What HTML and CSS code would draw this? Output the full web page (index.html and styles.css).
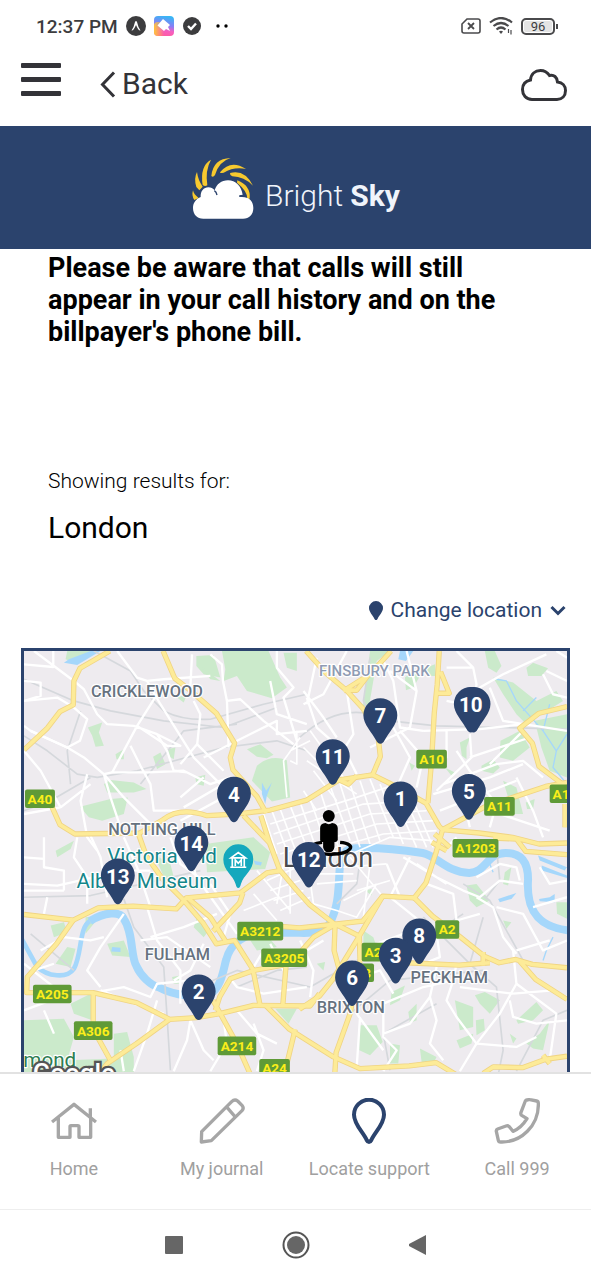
FILE: index.html
```html
<!DOCTYPE html>
<html lang="en">
<head>
  <meta charset="UTF-8">
  <meta name="viewport" content="width=device-width, initial-scale=1.0">
  <title>Bright Sky - Locate support</title>
  <link rel="stylesheet" href="styles.css">
</head>
<body>
  <!-- Status bar -->
  <div class="status-bar">
    <span class="clock">12:37 PM</span>
    <svg class="status-icon" width="20" height="20" viewBox="0 0 20 20"><circle cx="10" cy="10" r="10" fill="#3c3c3e"/><path d="M5.500 14.500Q8 11 9 6Q10 4 11 6Q12 11 14.500 14.500Q12.500 15 10 9Q7.500 15 5.500 14.500Z" fill="#fff"/></svg>
    <svg class="status-icon" width="20" height="20" viewBox="0 0 20 20">
      <defs><linearGradient id="app" x1="0.600" y1="0" x2="0.400" y2="1"><stop offset="0" stop-color="#35b8f5"/><stop offset="0.450" stop-color="#8a7df5"/><stop offset="0.700" stop-color="#f55fc0"/><stop offset="1" stop-color="#ff5aa0"/></linearGradient>
      <linearGradient id="app-edge"><stop offset="0" stop-color="#ffc53a"/><stop offset="0.500" stop-color="#ffc53a" stop-opacity="0"/></linearGradient></defs>
      <rect width="20" height="20" rx="4" fill="url(#app)"/><rect y="6" width="20" height="14" rx="4" fill="url(#app-edge)"/>
      <path d="M9 3L16 9L14 11L16 15L12 13L10 15L3.500 9.500Z" fill="#fff"/>
    </svg>
    <svg class="status-icon" width="20" height="20" viewBox="0 0 20 20"><circle cx="10" cy="10" r="9" fill="#3c3c3e"/><path d="M6 10L9 13L14 7.500" fill="none" stroke="#fff" stroke-width="2.400"/></svg>
    <svg class="dots" width="12" height="4"><circle cx="2" cy="2" r="1.700"/><circle cx="10" cy="2" r="1.700"/></svg>
    <div class="status-right">
      <svg width="20" height="16" viewBox="0 0 20 16" fill="none" stroke="#4a4a4c"><path d="M6 1H17Q19 1 19 3V13Q19 15 17 15H3Q1 15 1 13V6Z" stroke-width="1.600"/><path d="M7 5L13 11M13 5L7 11" stroke-width="1.800"/></svg>
      <svg width="24" height="18" viewBox="0 0 24 18" fill="none" stroke="#4a4a4c" stroke-width="2.200"><path d="M1 5.500Q12-3.500 23 5.500M4.500 9Q12 3 19.500 9M7.500 12.500Q12 8.500 16.500 12.500"/><path d="M10 14.500L12 17L14 14.500Q12 13 10 14.500Z" fill="#4a4a4c" stroke="none"/><path d="M19.500 12V16M22 13V17.500" stroke-width="1.200"/></svg>
      <span class="battery">96</span>
    </div>
  </div>

  <!-- Header -->
  <header class="header">
    <button class="menu" aria-label="Menu"><span></span><span></span><span></span></button>
    <a class="back" href="#back">
      <svg width="16" height="27" viewBox="0 0 16 27"><path d="M14 1.500L2.500 13.500L14 25.500" fill="none" stroke="#333338" stroke-width="3"/></svg>
      Back
    </a>
    <button class="cloud" aria-label="Quick exit">
      <svg width="46" height="32" viewBox="0 0 46 32"><path d="M11 30.500C5 30.500 1.500 26 1.500 20.500C1.500 15.500 4.500 12 9.500 11C10 5 14 1.500 19.500 1.500C24 1.500 26.500 3.500 28.500 6.500C33 5.500 36 8 36.500 13C41.500 13.500 44.500 17 44.500 21.500C44.500 27 41 30.500 36 30.500Z" fill="none" stroke="#333338" stroke-width="3"/></svg>
    </button>
  </header>

  <div class="banner">
    <svg class="logo" width="64" height="64" viewBox="0 0 192 192">
      <g fill="#f7c92f">
        <path d="M10 132Q1 119 6 103Q8 115 23 126Z"/>
        <path d="M16 93Q8 67 18 48Q21 72 35 92L25 103Z"/>
        <path d="M35 87Q26 30 60 11Q42 43 49 88Q42 93 35 87Z"/>
        <path d="M61 60Q66 8 119 6Q84 16 72 57Q66 66 61 60Z"/>
        <path d="M87 49Q119 9 165 39Q130 31 98 50Q86 53 87 49Z"/>
        <path d="M117 51Q161 39 186 89Q159 62 124 61Q116 58 117 51Z"/>
        <path d="M139 73Q180 89 176 128L169 128Q169 105 138 80Z"/>
      </g>
      <path d="M37 188C18 188 6 175 6 156C6 139 17 128 29 123C28 106 38 94 52 94C60 94 66 97 71 103C77 84 91 73 111 73C134 73 151 90 155 116Q144 116 145 122L161 124C176 126 187 138 187 156C187 176 175 188 156 188Z" fill="#fff"/>
      <path d="M70 104Q76 107 78 117M145 120H162" fill="none" stroke="#2b436d" stroke-width="4"/>
    </svg>
    <span class="brand">Bright <strong>Sky</strong></span>
  </div>

  <main class="content">
    <p class="notice">Please be aware that calls will still appear in your call history and on the billpayer's phone bill.</p>

    <div class="results">
      <p class="results-label">Showing results for:</p>
      <p class="results-place">London</p>
    </div>

    <button class="change-location">
      <svg width="14" height="19" viewBox="-51 -137 102 137"><path d="M0 0C-6 0-9-4-12-9C-25-35-51-58-51-86A51 51 0 0 1 51-86C51-58 25-35 12-9C9-4 6 0 0 0Z" fill="#2b436d"/></svg>
      <span>Change location</span>
      <svg width="16" height="11" viewBox="0 0 16 11"><path d="M1.500 2L8 8.500L14.500 2" fill="none" stroke="#2b436d" stroke-width="3"/></svg>
    </button>

    <div class="map">
      <svg viewBox="0 0 1632 1400" preserveAspectRatio="xMidYMin slice" role="group" aria-label="Map of London">
        <defs>
          <path id="pin" d="M0 0C-6 0-9-4-12-9C-25-35-51-58-51-86A51 51 0 0 1 51-86C51-58 25-35 12-9C9-4 6 0 0 0Z"/>
          <g id="major">
            <path d="M258 0L168 52L150 90L148 162L108 182L70 232L0 297"/>
            <path d="M418 0L453 82L498 117L578 187L633 277L620 320L628 357L700 437L728 487"/>
            <path d="M78 455L108 522L153 550L348 547L418 507Q468 467 550 495L640 490L740 478L850 448L948 387L1048 372L1118 407L1208 457L1248 527L1258 537L1238 607L1208 697L1173 742L1078 737L1000 870L928 987L888 1037L828 1077"/>
            <path d="M848 0L908 67L968 117L1018 172L1063 247L1071 317L1048 372M1103 0L1040 70L960 120M1038 68L1000 118L968 117M940 384L975 400L1000 375"/>
            <path d="M1248 0L1242 100L1233 187L1225 330L1214 457M1252 62L1278 127L1240 127"/>
            <path d="M1632 167L1548 187L1490 232L1528 277L1548 347L1632 410"/>
            <path d="M1258 537L1388 467L1478 437L1568 407L1632 395M1626 460V530"/>
            <path d="M1258 537L1368 547L1468 560L1548 580L1632 577M1410 562L1480 565L1508 602L1632 612M1226 575L1270 600M1234 550L1280 590"/>
            <path d="M0 792L148 809L223 772L328 767L458 775L488 742L650 727L730 667L770 660"/>
            <path d="M148 809L98 880L10 980L8 1027L208 1027L338 1057L438 1107L518 1102L588 1090L690 1065L860 1067L888 1030"/>
            <path d="M438 1107L338 1180L250 1240L210 1290M208 1027L208 1137L258 1227"/>
            <path d="M343 547L368 617L418 687L478 747L538 817L578 880L633 870L688 957L710 1067M492 742L560 800L606 872"/>
            <path d="M658 727L648 757L568 842M660 495L738 577L768 657L818 717L858 762L935 822M712 495L738 577"/>
            <path d="M690 960L620 985L588 1040L575 1080M568 1050L638 1177L688 1290M788 940L778 1062"/>
            <path d="M728 1067L798 1137L850 1170L930 1220L1010 1255L1158 1247L1238 1237L1310 1280M815 1137L778 1290"/>
            <path d="M760 827L828 832L898 825L1018 812L1078 737M935 822L932 900L948 960M938 822L1008 857L1010 930L980 1090L938 1207L933 1290M935 822L870 860L800 940L690 960"/>
            <path d="M1173 742L1228 797L1308 857L1383 917L1428 937L1478 927L1528 942L1632 952M1150 937L1308 944L1400 937M1380 905V945M1488 930L1538 987L1632 1047"/>
            <path d="M1380 1270L1410 1250L1500 1252L1568 1227L1632 1218M1560 1215L1580 1240"/>
          </g>
        </defs>
        <rect width="1632" height="1400" fill="#eeebef"/>

        <!-- Parks -->
        <g fill="#cbeacb">
          <path d="M130 0H220L160 40L125 25ZM518 15L570 12L590 80L540 70L518 45ZM595 0H735L770 80L790 110L745 142L670 120L640 75L600 90L605 55Z"/>
          <path d="M780 5H820V60L790 50ZM460 140L490 130L480 155ZM192 230L235 215L225 245L240 285L215 288L205 255ZM388 318L410 305L425 340L400 355ZM430 295L455 290L450 325L432 315ZM275 310L300 295L300 325H278ZM515 380L545 372L540 405L518 400Z"/>
          <path d="M670 295L710 280L750 312L730 322L700 318ZM700 345Q740 310 790 328L800 440L745 452L685 390ZM240 400L260 388L330 395L368 415L330 425H250ZM168 468L260 445L312 440L300 490L235 510L195 500ZM95 600L150 570L140 595L100 620Z"/>
          <path d="M545 580L690 560L740 605L725 655L550 665ZM390 610L440 640L458 710L430 700ZM80 825L120 815L130 845L90 860ZM185 800L230 795L185 850ZM250 880L300 870L320 920L265 915ZM130 890L155 895L140 950L95 940ZM520 800L560 835L540 860L510 830Z"/>
          <path d="M680 870L730 855L760 890L700 900ZM445 980L470 975L465 1000L450 1000ZM0 1110L120 1105L150 1160L130 1230L270 1225L270 1150L310 1145L330 1220L330 1400H0ZM140 1060L200 1030L205 1110L150 1090ZM755 1075L820 1075L795 1120Z"/>
          <path d="M1040 0H1100L1060 30L1038 160L1018 170ZM1145 80L1170 60L1190 75L1170 110L1148 118ZM1208 50L1235 40L1238 75L1215 75ZM1385 0H1415L1435 45L1420 65L1395 50ZM1410 80L1470 95L1540 150L1600 120L1620 150L1540 200L1510 220L1480 190L1440 130ZM1510 50L1530 35L1575 52L1555 75L1515 75Z"/>
          <path d="M1535 210L1632 190V380L1580 360L1555 290ZM1432 270L1490 240L1520 290L1470 330L1430 320ZM1375 345L1410 325L1430 350L1410 368L1375 360ZM1310 275L1340 260L1330 290L1330 325L1316 315ZM1265 350L1295 365L1285 375ZM1158 335L1175 345L1165 360ZM1440 390L1480 410L1500 490H1470ZM1508 455L1535 445L1530 475H1512Z"/>
          <path d="M1330 705L1360 700L1400 750L1360 770L1340 750ZM1445 665L1465 650L1455 705L1440 700ZM1600 755H1632V805L1602 790ZM1440 810L1465 815L1450 835ZM1025 720L1045 715V735ZM1020 840L1050 860L1060 890L1020 880ZM1105 1025L1145 1005L1130 1050L1100 1065ZM1155 1085L1180 1060V1110L1160 1118ZM1295 1050L1350 1070L1350 1130L1310 1140Z"/>
          <path d="M1355 1035L1385 1025L1430 1050L1400 1090L1370 1060ZM1358 1110L1382 1105L1385 1140L1360 1155ZM1300 1170L1350 1150L1345 1180L1310 1195ZM1008 1125L1060 1125L1078 1175L1040 1215L1008 1200ZM1100 1180L1130 1185L1125 1240L1100 1240ZM1190 1195L1240 1220L1230 1240L1195 1235ZM1480 1110L1540 1055L1560 1080L1530 1110L1485 1120ZM1510 1180L1550 1150L1580 1110L1560 1200L1530 1195ZM1460 1150L1480 1165L1470 1180ZM880 940L905 935L900 960ZM530 45L590 90L560 85Z"/>
        </g>

        <!-- River and lakes -->
        <g fill="#a5d7fb">
          <path d="M135 25L200 0H230L160 42L120 35ZM1130 0H1170L1148 30L1125 25ZM715 395L728 420L745 395L730 435L725 460L715 430ZM265 890L290 892V905L262 903ZM690 630L715 635L712 645L695 642ZM1425 745L1480 727L1465 745L1430 755ZM1548 745L1580 740L1595 730V755L1550 752ZM1545 615L1632 650L1625 660L1550 630ZM1556 645L1632 675V682L1556 660Z"/>
        </g>
        <g class="river">
          <path class="upper" d="M-10 860L38 947C70 980 130 985 150 955C175 910 165 830 198 812"/>
          <path d="M198 812C240 785 290 780 300 805C330 850 320 920 338 947C350 975 380 1005 408 1012C450 1035 530 1045 560 1030C595 1010 600 950 608 927C620 880 660 855 708 847L828 847C880 850 910 835 918 820C945 770 945 720 948 667C950 610 965 592 1000 593C1060 590 1110 594 1198 607C1240 615 1270 665 1338 667C1390 665 1390 607 1448 607C1490 607 1515 630 1515 687C1510 760 1530 830 1640 840"/>
          <path class="stream" d="M1420 85L1450 90L1480 150L1560 240L1600 300L1590 350L1632 400M1500 180L1540 140M1560 240L1580 160M1632 250L1600 300M1590 860L1570 900L1560 930M1400 640L1410 665"/>
        </g>

        <!-- Railways -->
        <g class="rail">
          <path d="M210 0L320 60L360 120L420 180Q480 210 560 205L720 160L850 130M0 85L150 150L260 180L420 210L600 230L760 170M350 400L440 290L480 240L640 220M140 400L130 300L170 180M0 255L70 300L160 370L220 380L340 360L600 290L760 270L850 300M828 260Q960 140 1100 210L1240 225L1632 235M1040 20L1020 150L1080 260"/>
          <path d="M0 740L200 735L400 690L530 660M0 480L80 450L200 380M300 745L330 830L420 950L430 1100L440 1260M20 850L150 960M640 1010L760 960L850 950M520 1010L640 960L860 1010M1500 930L1400 750L1320 700M1390 740L1430 690L1420 590M1380 800L1340 940L1420 1010L1440 1200L1400 1400M1200 800L1300 900L1380 980M860 1010L1000 930L1180 880L1320 790M980 1090L1100 990L1380 960M1100 1260L1080 1150L1240 1060M1480 1263L1560 1110L1632 1080M1010 630L1000 700L940 760"/>
        </g>

        <!-- Streets -->
        <g class="streets">
          <path d="M30 0L90 45L150 90L180 115L220 190L250 220L330 225L400 250L470 285L430 285L340 225M0 40L88 48V0M0 90L50 95V135L0 150M0 150L100 140L150 170L190 205L168 270L130 290L20 240L0 225M280 0L340 80L370 90L420 85L560 75M370 90L410 160L510 320L620 430M400 130L340 225L265 365M500 110L505 10M560 10L595 40L598 90L610 150L615 290M610 150L650 145L720 210L810 280M740 90L760 190L850 220M760 0L760 50L810 110L780 140L820 270M510 150L530 190L520 285M0 300L50 360L110 470"/>
          <path d="M20 240L130 290L180 320L240 370L300 440L400 540M240 370L265 365L375 365L480 360L560 400L620 380M320 285L350 345L380 400L390 480L470 480M400 250L430 300L450 360L490 365M470 340L520 280L600 360M240 370L260 440L290 530M110 470L0 490M110 470L200 400M190 370L170 450L190 560L220 600M540 380L470 440M540 320L600 290L760 210L760 250L850 240M480 470L600 400M470 510L600 440"/>
          <path d="M60 560V650L120 660V720M0 620L60 625M200 555L230 620L250 740M0 700L100 705L300 660L380 660M120 720H0M70 740L60 790M160 560L150 620L190 680L190 760M300 560L340 650L380 770M440 560L470 640L540 690M500 580L520 700M370 770L400 870L470 960L470 1060M380 860L480 830L580 790M540 710L640 850M350 870L430 860L560 950M300 790L230 890L190 960L230 1010M50 900L120 860L200 870L240 860M0 940L90 1010M30 960L90 940M560 700L620 790L600 860"/>
          <path d="M208 1027L300 1010L380 1040L400 1000L500 990M400 1050L370 1150L330 1263M500 1110L490 1170L450 1263M500 1110L540 1200L570 1230M230 1020L330 1060L420 1090M600 1110L610 1180L560 1263M640 1080L700 1150L760 1180M540 880L500 960L450 990M620 985L640 1010L720 1030L850 1010M720 900L690 950M740 880L780 960M60 1080L90 1150M0 1080L80 1050M290 1200L300 1263M700 1263L720 1200L690 1120"/>
          <path d="M850 140L880 230L970 310L1000 370M840 120L900 200L940 260M880 20L850 160M970 0L900 130L840 160M970 120L990 250L940 330M1080 30L1110 90L1130 230L1200 240M1150 0L1180 120L1160 230L1040 290M1100 60L1180 120M1300 0L1350 50L1360 100L1340 240M1270 50L1350 50M1370 110L1440 70L1570 10M1370 110L1320 160L1270 150M1400 110L1440 210L1632 240M1200 240L1370 235L1500 220M1270 240V320L1220 330M1130 240L1200 320L1180 410M1110 230L1160 320L1120 410M1340 250L1345 320L1240 420M1260 400L1420 340L1500 330L1560 380"/>
          <path d="M1340 320L1520 260M1400 340L1500 240M1300 300L1340 360L1420 460L1400 530M1230 430L1400 380L1500 340M1250 480L1480 390M1310 400L1340 530M1480 380L1530 480L1560 560M1400 480L1580 540M1570 60L1632 90M1600 0L1632 20M1560 70L1590 130L1632 140"/>
          <path d="M1260 600L1300 560M1140 620L1240 680L1320 720L1370 740L1430 690L1500 700M1180 640L1270 700M1090 640L1130 740M1160 620L1100 740L1200 820M1210 700L1290 730L1300 810L1370 790M1360 740L1410 770L1440 860L1470 900L1480 1000L1430 1090L1360 1180L1310 1263M1420 770L1500 790L1560 900L1632 870M1360 680L1430 640L1480 650L1490 690M1550 650L1580 700L1632 690M1530 770L1632 740M1480 900L1580 870M1440 860L1480 910"/>
          <path d="M1060 880L1140 850L1220 830M1240 850L1250 920L1200 940M1300 940L1290 990L1200 1010L1080 1060L1080 1160L1120 1200L1080 1263M1080 1150L1160 1120L1220 1040L1240 950M1220 1040L1240 1110L1220 1180L1260 1230M1310 1010L1470 1030M1290 990L1270 1050L1300 1100L1360 1180L1480 1190L1540 1160M1470 1030L1590 1020L1632 1040M1480 1000L1600 1090L1580 1230M1460 1050L1470 1100L1540 1120L1632 1110M1000 1090L1080 1200M950 1000L1070 960L1110 1030M1010 1100L1000 1250M830 870L870 960L860 1040M850 900L900 870"/>
        </g>
        <g class="streets small">
          <path d="M720 490L760 610M745 480L790 600M770 475L820 610M800 465L850 590M830 455L880 600M860 445L910 590M890 420L945 590M920 405L980 570M950 400L1010 590M980 400L1040 580M1010 390L1070 570M1040 385L1110 560M1070 400L1140 580M1100 410L1180 590M1140 430L1210 590M1170 450L1230 590"/>
          <path d="M740 520L1000 440L1120 400M750 550L1020 460L1180 450M760 580L1040 490L1210 480M770 610L1060 520L1230 510M830 620L1080 550L1240 540M840 420L880 480M870 360L940 450M850 330L1000 430M840 290L930 380M860 240L960 380M960 620L1100 560L1230 570M790 440L780 330L830 260M800 300L860 270M820 240V340L800 330"/>
          <path d="M700 660L800 780M730 690L820 650M740 720L830 690M750 750L840 720M770 780L860 740M690 730L760 810M780 640L760 760M800 650L800 790M660 780L760 740M850 620L870 760L940 780M860 670L990 670M880 700L1000 690M960 650L1090 640M980 620L1080 740M1000 720L1100 690M960 750L1060 700M940 780L1000 800L1060 700M1040 640L1020 800"/>
        </g>

        <!-- Main roads -->
        <use href="#major" class="road-edge"/>
        <use href="#major" class="road"/>

        <g class="area">
          <text x="201" y="138">CRICKLEWOOD</text>
          <text x="887" y="74" class="faded">FINSBURY PARK</text>
          <text x="253" y="552">NOTTING HILL</text>
          <text x="363" y="930">FULHAM</text>
          <text x="1162" y="998">PECKHAM</text>
          <text x="880" y="1088">BRIXTON</text>
        </g>
        <g class="place">
          <text x="250" y="637">Victoria and</text>
          <text x="158" y="711">Albert Museum</text>
          <text x="-2" y="1250" class="park">mond</text>
        </g>
        <text x="778" y="649" class="city">London</text>

        <g class="shield">
          <rect x="3" y="416" width="90" height="56" rx="6"/><text x="48" y="459">A40</text>
          <rect x="1179" y="297" width="92" height="56" rx="6"/><text x="1225" y="340">A10</text>
          <rect x="1383" y="439" width="92" height="56" rx="6"/><text x="1429" y="482">A11</text>
          <rect x="1580" y="401" width="92" height="56" rx="6"/><text x="1626" y="444">A12</text>
          <rect x="1288" y="565" width="138" height="56" rx="6"/><text x="1357" y="608">A1203</text>
          <rect x="641" y="814" width="138" height="56" rx="6"/><text x="710" y="857">A3212</text>
          <rect x="713" y="894" width="138" height="56" rx="6"/><text x="782" y="937">A3205</text>
          <rect x="1236" y="809" width="72" height="56" rx="6"/><text x="1272" y="852">A2</text>
          <rect x="1015" y="877" width="92" height="56" rx="6"/><text x="1061" y="920">A23</text>
          <rect x="960" y="939" width="92" height="56" rx="6"/><text x="1006" y="982">A23</text>
          <rect x="27" y="1003" width="116" height="56" rx="6"/><text x="85" y="1046">A205</text>
          <rect x="150" y="1113" width="116" height="56" rx="6"/><text x="208" y="1156">A306</text>
          <rect x="582" y="1159" width="116" height="56" rx="6"/><text x="640" y="1202">A214</text>
          <rect x="707" y="1226" width="92" height="56" rx="6"/><text x="753" y="1269">A24</text>
        </g>

        <!-- Museum marker -->
        <g transform="translate(644 712)">
          <path d="M0 0C-4 0-6-4-8-12C-16-40-45-50-45-86A45 45 0 0 1 45-86C45-50 16-40 8-12C6-4 4 0 0 0Z" fill="#14a8bd"/>
          <path d="M-22-90L0-106L22-90ZM-18-90V-64M18-90V-64M-24-62H24M-9-66V-84L0-74L9-84V-66" fill="none" stroke="#fff" stroke-width="5"/>
        </g>

        <!-- Current position -->
        <g transform="translate(916 592)">
          <path d="M-20-17C-70-12-60 16 0 19C70 21 88-13 34-17" fill="none" stroke="#000" stroke-width="10"/>
          <circle cy="-96" r="18"/><path d="M-10-75Q0-68 10-75Q26-74 27-60V-24Q24-16 17-18V-2Q14 14 0 13Q-14 14-17-2V-18Q-26-16-26-24V-60Q-26-74-10-75Z"/>
        </g>

        <g class="pins">
          <a href="#result-7" transform="translate(1071 279)"><use href="#pin"/><text y="-62">7</text></a>
          <a href="#result-9" transform="translate(1351 245)"><use href="#pin"/></a>
          <a href="#result-10" transform="translate(1343 245)"><use href="#pin"/><text y="-62">10</text></a>
          <a href="#result-11" transform="translate(928 402)"><use href="#pin"/><text y="-62">11</text></a>
          <a href="#result-1" transform="translate(1132 529)"><use href="#pin"/><text y="-62">1</text></a>
          <a href="#result-5" transform="translate(1337 507)"><use href="#pin"/><text y="-62">5</text></a>
          <a href="#result-4" transform="translate(631 515)"><use href="#pin"/><text y="-62">4</text></a>
          <a href="#result-14" transform="translate(503 662)"><use href="#pin"/><text y="-62">14</text></a>
          <a href="#result-13" transform="translate(282 761)"><use href="#pin"/><text y="-62">13</text></a>
          <a href="#result-12" transform="translate(856 711)"><use href="#pin"/><text y="-62">12</text></a>
          <a href="#result-2" transform="translate(525 1109)"><use href="#pin"/><text y="-62">2</text></a>
          <a href="#result-8" transform="translate(1188 941)"><use href="#pin"/><text y="-62">8</text></a>
          <a href="#result-3" transform="translate(1117 999)"><use href="#pin"/><text y="-62">3</text></a>
          <a href="#result-6" transform="translate(986 1067)"><use href="#pin"/><text y="-62">6</text></a>
        </g>
        <text x="26" y="1296" class="google">Google</text>
      </svg>
    </div>
  </main>

  <!-- Tab bar -->
  <nav class="tabs">
    <a href="#home">
      <svg width="46" height="46" viewBox="0 0 138 138" fill="none" stroke="#a6a6a6" stroke-width="10" stroke-linejoin="round"><path d="M3 72L69 19L135 72M118 57V31M22 60V118H57V86Q57 83 60 83H80Q84 83 84 86V118H119V60"/></svg>
      Home
    </a>
    <a href="#journal">
      <svg width="46" height="46" viewBox="0 0 138 138" fill="none" stroke="#a6a6a6" stroke-width="10" stroke-linejoin="round"><path d="M8 101L98 11Q107 2 116 9L129 22Q136 30 129 38L37 128L7 132ZM84 28L109 57"/></svg>
      My journal
    </a>
    <a href="#support">
      <svg width="46" height="46" viewBox="0 0 138 138" fill="none" stroke="#2b436d" stroke-width="12" stroke-linejoin="round"><path d="M69 132Q65 132 62 126C52 103 24 79 24 50A45 45 0 0 1 114 50C114 79 86 103 76 126Q73 132 69 132Z"/></svg>
      Locate support
    </a>
    <a href="#call">
      <svg width="46" height="46" viewBox="0 0 138 138" fill="none" stroke="#a6a6a6" stroke-width="10" stroke-linejoin="round"><path d="M100 6Q104 4 108 5L128 9Q133 10 133 16C135 83 81 134 20 132Q14 132 13 127L7 100Q6 95 11 93L36 84Q42 82 46 86L57 100Q82 90 99 62L83 52Q79 49 81 43L94 9Q96 5 100 6Z"/></svg>
      Call 999
    </a>
  </nav>

  <div class="system-bar">
    <button aria-label="Recent apps"><svg width="18" height="18"><rect width="18" height="18" rx="1" fill="#666"/></svg></button>
    <button aria-label="Home screen"><svg width="28" height="28"><circle cx="14" cy="14" r="12.500" fill="none" stroke="#555" stroke-width="2"/><circle cx="14" cy="14" r="9" fill="#666"/></svg></button>
    <button aria-label="Back"><svg width="18" height="20"><path d="M17 0V20L0 11Q-1 10 0 9Z" fill="#666"/></svg></button>
  </div>
</body>
</html>
```

FILE: styles.css
```css
* {
  box-sizing: border-box;
}

body {
  margin: 0;
  height: 100vh;
  display: flex;
  flex-direction: column;
  background-color: #fff;
  color: #000;
  font-family: Roboto, Arial, sans-serif;
}

button {
  padding: 0;
  border: none;
  background: none;
  font: inherit;
  color: inherit;
  cursor: pointer;
}

a {
  color: inherit;
  text-decoration: none;
}

p {
  margin: 0;
}

svg {
  display: block;
}

/* Status bar */
.status-bar {
  flex: none;
  display: flex;
  align-items: center;
  height: 52px;
  padding: 0 36px;
  color: #3c3c3e;
}

.clock {
  font-size: 19px;
  font-weight: 500;
}

.status-icon {
  margin-left: 8px;
}

.dots {
  margin-left: 14px;
}

.status-right {
  display: flex;
  align-items: center;
  gap: 8px;
  margin-left: auto;
}

.battery {
  position: relative;
  width: 34px;
  height: 17px;
  border: 2px solid #4a4a4c;
  border-radius: 5px;
  background-color: #e4e4e4;
  box-shadow: inset 0 0 0 1px #fff;
  font-size: 13px;
  line-height: 14px;
  text-align: center;
}

.battery::after {
  content: "";
  position: absolute;
  right: -5px;
  top: 4px;
  width: 2px;
  height: 5px;
  background-color: #4a4a4c;
}

/* Header */
.header {
  flex: none;
  display: flex;
  align-items: center;
  height: 74px;
  padding: 0 24px 20px 21px;
  color: #333338;
}

.menu {
  display: flex;
  flex-direction: column;
  gap: 9px;
  width: 40px;
}

.menu span {
  height: 5px;
  border-radius: 1px;
  background-color: #333338;
}

.back {
  display: flex;
  align-items: center;
  gap: 6px;
  margin-left: 39px;
  padding-top: 10px;
  font-size: 30px;
  line-height: 36px;
}

.cloud {
  margin-left: auto;
  padding-top: 12px;
}

.banner {
  flex: none;
  display: flex;
  justify-content: center;
  align-items: center;
  gap: 10px;
  height: 123px;
  background-color: #2b436d;
  color: #f0f4fb;
}

.brand {
  padding-top: 16px;
  font-size: 30px;
  font-weight: 300;
}

.brand strong {
  font-weight: 700;
}

/* Page content */
.content {
  flex: 1;
  min-height: 0;
  overflow: hidden;
  padding: 3px 21px 0;
}

.notice {
  padding: 0 27px;
  max-width: 520px;
  font-size: 27px;
  font-weight: 700;
  line-height: 32px;
}

.results {
  padding: 120px 27px 0;
}

.results-label {
  font-size: 21px;
  font-weight: 300;
  line-height: 26px;
}

.results-place {
  margin-top: 16px;
  font-size: 30px;
  line-height: 36px;
}

.change-location {
  display: flex;
  align-items: center;
  gap: 8px;
  margin: 50px 4px 0 auto;
  color: #2b436d;
  font-size: 21px;
  line-height: 28px;
}

.map {
  margin-top: 24px;
  border: 3px solid #2b436d;
}

.map svg {
  width: 100%;
  height: auto;
}

/* Map drawing */
.river,
.rail,
.streets,
.road,
.road-edge {
  fill: none;
  stroke-linejoin: round;
}

.river {
  stroke: #a5d7fb;
  stroke-width: 24px;
}

.river .upper {
  stroke-width: 14px;
}

.river .stream {
  stroke-width: 4px;
}

.rail {
  stroke: #d5d8dc;
  stroke-width: 5px;
}

.streets {
  stroke: #fff;
  stroke-width: 7px;
}

.streets.small {
  stroke-width: 5px;
}

.road-edge {
  stroke: #f0d483;
  stroke-width: 16px;
}

.road {
  stroke: #fdeb98;
  stroke-width: 11px;
}

.area text,
.place text,
.city {
  paint-order: stroke;
  stroke: #fff;
  stroke-width: 7px;
  stroke-linejoin: round;
}

.area {
  fill: #66727f;
  font-size: 49px;
  font-weight: 500;
}

.area .faded {
  fill: #8f9bb3;
  font-size: 45px;
}

.place {
  fill: #14868a;
  font-size: 62px;
}

.place .park {
  fill: #2d7d51;
}

.city {
  fill: #4a4a4e;
  font-size: 81px;
}

.shield {
  fill: #5f9a37;
}

.shield text {
  fill: #fbee1a;
  font-size: 41px;
  font-weight: 700;
  text-anchor: middle;
}

.pins {
  fill: #2b436d;
}

.pins text {
  fill: #fff;
  font-size: 62px;
  font-weight: 700;
  text-anchor: middle;
}

.google {
  paint-order: stroke;
  fill: #fff;
  stroke: #555;
  stroke-width: 14px;
  font-size: 78px;
  font-weight: 500;
}

/* Tab bar */
.tabs {
  flex: none;
  display: grid;
  grid-template-columns: repeat(4, 1fr);
  height: 138px;
  padding-top: 24px;
  border-top: 2px solid #e2e2e2;
  border-bottom: 1px solid #eee;
  background-color: #fff;
  color: #a0a0a0;
}

.tabs a {
  display: flex;
  flex-direction: column;
  align-items: center;
  gap: 14px;
  font-size: 18px;
  line-height: 22px;
}

.system-bar {
  flex: none;
  display: flex;
  justify-content: center;
  align-items: center;
  gap: 99px;
  height: 70px;
}
```
